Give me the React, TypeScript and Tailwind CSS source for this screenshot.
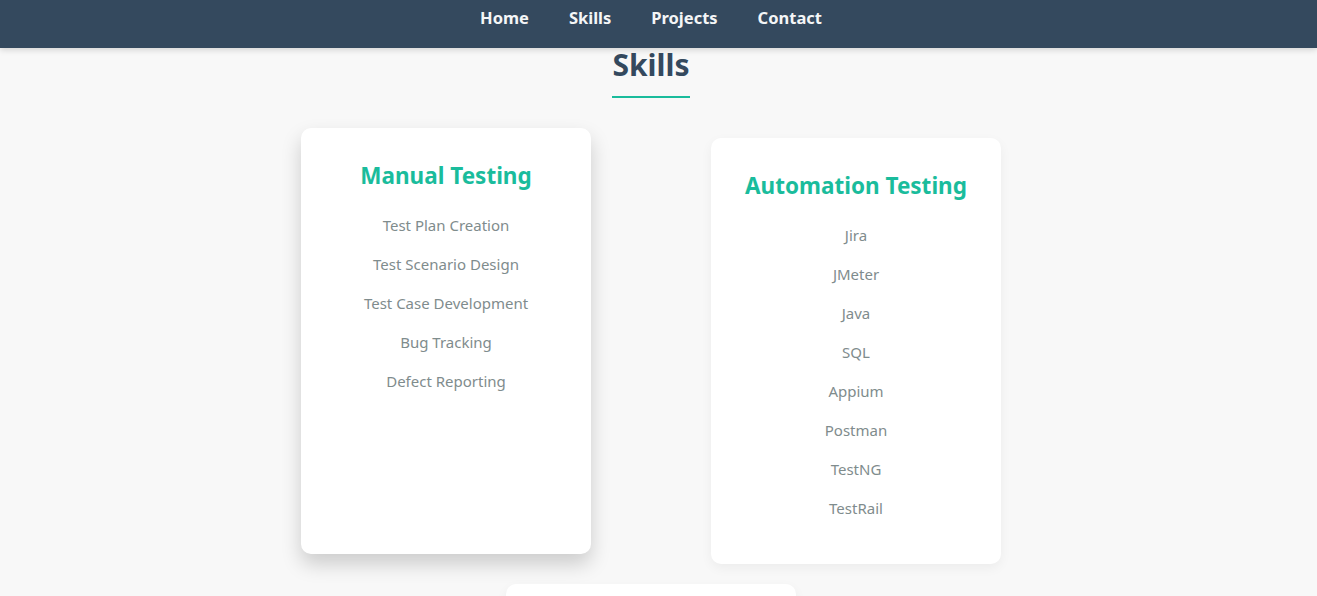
import React from 'react';

const skillGroups = [
  {
    title: 'Manual Testing',
    items: ['Test Plan Creation', 'Test Scenario Design', 'Test Case Development', 'Bug Tracking', 'Defect Reporting'],
    active: true,
  },
  {
    title: 'Automation Testing',
    items: ['Jira', 'JMeter', 'Java', 'SQL', 'Appium', 'Postman', 'TestNG', 'TestRail'],
    active: false,
  },
];

const navLinks = ['Home', 'Skills', 'Projects', 'Contact'];

export default function App() {
  return (
    <div className="min-h-screen bg-[#f8f8f8] font-['Noto_Sans',sans-serif]">
      <nav className="h-[48px] bg-[#34495e] shadow-[0_2px_6px_rgba(0,0,0,0.15)] relative z-10">
        <ul className="w-[1302px] flex justify-center gap-[40px] pt-[6px]">
          {navLinks.map((link) => (
            <li key={link}>
              <a href="#" className="text-[16.5px] leading-[24px] font-bold text-[#f4f6f7]">
                {link}
              </a>
            </li>
          ))}
        </ul>
      </nav>

      <section className="w-[1302px] flex flex-col items-center pb-[40px]">
        <h2 className="text-[30px] leading-[34px] font-bold text-[#34495e] pb-[14px] border-b-2 border-[#1abc9c]">
          Skills
        </h2>

        <div className="mt-[40px] w-[860px] flex flex-wrap justify-center gap-x-[120px] gap-y-[20px]">
          {skillGroups.map((group) => (
            <div
              key={group.title}
              className={
                group.active
                  ? 'w-[290px] bg-white rounded-[10px] pt-[30px] pb-[36px] text-center -translate-y-[10px] shadow-[0_10px_20px_rgba(0,0,0,0.18)]'
                  : 'w-[290px] bg-white rounded-[10px] pt-[30px] pb-[36px] text-center shadow-[0_4px_12px_rgba(0,0,0,0.05)]'
              }
            >
              <h3 className="text-[22.5px] leading-[36px] font-bold text-[#1abc9c] mb-[12px]">{group.title}</h3>
              <ul>
                {group.items.map((item) => (
                  <li key={item} className="h-[39px] flex items-center justify-center text-[15px] text-[#7f8c8d]">
                    {item}
                  </li>
                ))}
              </ul>
            </div>
          ))}
          <div className="w-[290px] h-[240px] bg-white rounded-[10px] shadow-[0_4px_12px_rgba(0,0,0,0.05)]" />
        </div>
      </section>
    </div>
  );
}
